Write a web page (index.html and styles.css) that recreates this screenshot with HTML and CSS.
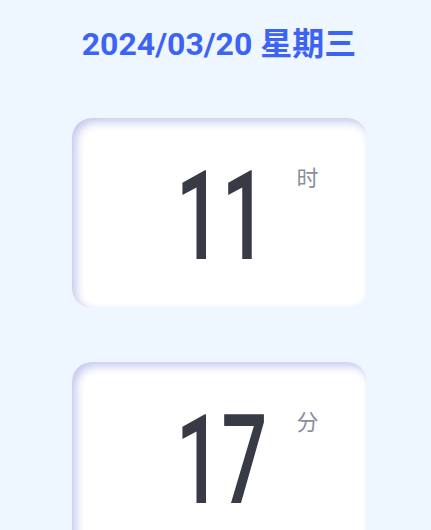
FILE: index.html
```html
<!DOCTYPE html>
<html lang="zh-CN">
<head>
<meta charset="UTF-8">
<meta name="viewport" content="width=device-width, initial-scale=1.0">
<title>时钟</title>
<link rel="stylesheet" href="styles.css">
</head>
<body>
<div class="clock">
<h1 class="date">2024/03/20 星期三</h1>
<div class="card">
<span class="num">11</span>
<span class="unit">时</span>
</div>
<div class="card">
<span class="num">17</span>
<span class="unit">分</span>
</div>
</div>
</body>
</html>
```

FILE: styles.css
```css
body {
margin: 0;
padding: 0;
background-color: #eef6ff;
font-family: Roboto, "Noto Sans CJK SC", sans-serif;
}
.clock {
display: flex;
flex-direction: column;
align-items: center;
padding: 0 0 0 7px;
}
.date {
margin: 24px 0 0;
font-size: 32px;
font-weight: bold;
color: #3d63f5;
line-height: 40px;
}
.card {
position: relative;
width: 295px;
height: 190px;
margin-top: 54px;
background-color: #fff;
border-radius: 20px;
box-shadow: inset 4px 4px 10px #c3c7ee;
display: flex;
justify-content: center;
align-items: center;
}
.num {
margin: 8px 0 0 4px;
font-size: 124px;
font-weight: 500;
color: #383a45;
line-height: 1;
transform: scaleX(0.65);
}
.unit {
position: absolute;
top: 42px;
right: 48px;
font-size: 22px;
color: #8b8e9c;
}
```
